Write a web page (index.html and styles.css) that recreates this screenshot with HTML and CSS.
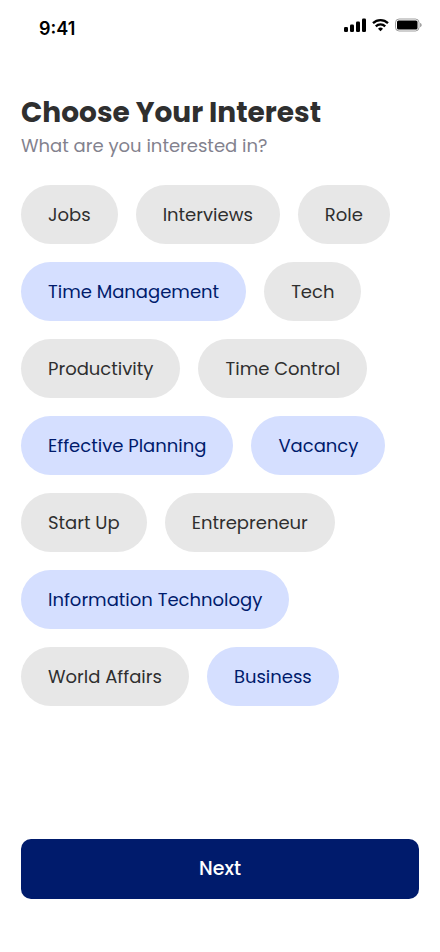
FILE: index.html
```html
<!DOCTYPE html>
<html lang="en">
<head>
<meta charset="utf-8">
<meta name="viewport" content="width=device-width, initial-scale=1">
<title>Choose Your Interest</title>
<link rel="stylesheet" href="styles.css">
</head>
<body>
<div class="screen">
  <div class="status">
    <time class="clock">9:41</time>
    <div class="indicators">
      <svg width="22" height="14" viewBox="0 0 22 14" aria-hidden="true">
        <rect x="0" y="9" width="4" height="5" rx="1.2"/>
        <rect x="6" y="6.5" width="4" height="7.5" rx="1.2"/>
        <rect x="12" y="3.5" width="4" height="10.5" rx="1.2"/>
        <rect x="18" y="0.5" width="4" height="13.5" rx="1.2"/>
      </svg>
      <svg width="17" height="14" viewBox="0 0 17 14" fill="none" stroke="#000" stroke-width="2.3" aria-hidden="true">
        <path d="M1 5.2a10.8 10.8 0 0 1 15 0"/>
        <path d="M3.8 8.4a6.7 6.7 0 0 1 9.4 0"/>
        <path d="M8.5 13.2 6 10.8a3.6 3.6 0 0 1 5 0z" fill="#000" stroke="none"/>
      </svg>
      <svg width="27" height="14" viewBox="0 0 27 14" aria-hidden="true">
        <rect x="0.5" y="1" width="23.5" height="12" rx="3.6" fill="none" stroke="#000" stroke-opacity=".38"/>
        <rect x="2" y="2.5" width="20.5" height="9" rx="1.6"/>
        <path d="M25.2 5v4.2c.9-.3 1.4-1.1 1.4-2.1s-.5-1.8-1.4-2.1z" fill-opacity=".45"/>
      </svg>
    </div>
  </div>
  <main class="content">
    <h1 class="title">Choose Your Interest</h1>
    <p class="subtitle">What are you interested in?</p>
    <form class="form">
      <div class="chips">
        <label class="chip"><input type="checkbox">Jobs</label>
        <label class="chip"><input type="checkbox">Interviews</label>
        <label class="chip"><input type="checkbox">Role</label>
        <label class="chip"><input type="checkbox" checked>Time Management</label>
        <label class="chip"><input type="checkbox">Tech</label>
        <label class="chip"><input type="checkbox">Productivity</label>
        <label class="chip"><input type="checkbox">Time Control</label>
        <label class="chip"><input type="checkbox" checked>Effective Planning</label>
        <label class="chip"><input type="checkbox" checked>Vacancy</label>
        <label class="chip"><input type="checkbox">Start Up</label>
        <label class="chip"><input type="checkbox">Entrepreneur</label>
        <label class="chip"><input type="checkbox" checked>Information Technology</label>
        <label class="chip"><input type="checkbox">World Affairs</label>
        <label class="chip"><input type="checkbox" checked>Business</label>
      </div>
      <button class="next" type="button">Next</button>
    </form>
  </main>
</div>
</body>
</html>
```
FILE: styles.css
```css
* {
  box-sizing: border-box;
}

body {
  margin: 0;
  background: #fff;
  color: #2f2f2f;
  font-family: Poppins, Inter, sans-serif;
}

.screen {
  display: flex;
  flex-direction: column;
  min-height: 100vh;
}

.status {
  display: flex;
  align-items: flex-start;
  justify-content: space-between;
  padding: 18px 18px 0 39px;
}

.clock {
  color: #000;
  font-family: Inter, sans-serif;
  font-size: 18px;
  font-weight: 600;
  line-height: 22px;
}

.indicators {
  display: flex;
  align-items: center;
  gap: 6px;
}

.content {
  flex: 1;
  display: flex;
  flex-direction: column;
  padding: 54px 21px 53px;
}

.title {
  margin: 0;
  font-size: 28px;
  font-weight: 700;
  line-height: 38px;
}

.subtitle {
  margin: 0;
  color: #83828e;
  font-size: 18px;
  line-height: 28px;
}

.form {
  flex: 1;
  display: flex;
  flex-direction: column;
  justify-content: space-between;
  padding-top: 25px;
}

.chips {
  display: flex;
  flex-wrap: wrap;
  gap: 18px;
}

.chip {
  position: relative;
  padding: 15px 27px;
  border-radius: 30px;
  background: #e7e7e7;
  font-size: 18px;
  font-weight: 400;
  line-height: 29px;
  cursor: pointer;
}

.chip input {
  position: absolute;
  inset: 0;
  margin: 0;
  opacity: 0;
  cursor: pointer;
}

.chip:has(:checked) {
  background: #d5dfff;
  color: #001b6c;
}

.next {
  padding: 15px;
  border: 0;
  border-radius: 10px;
  background: #001b6c;
  color: #fff;
  font: inherit;
  font-size: 19px;
  font-weight: 500;
  line-height: 30px;
  cursor: pointer;
}
```
